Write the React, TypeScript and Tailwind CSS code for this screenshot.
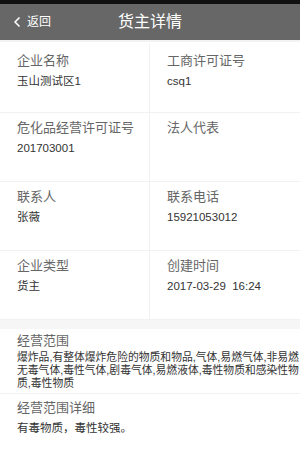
import { ChevronLeft } from "lucide-react";

const rows = [
  [
    { label: "企业名称", value: "玉山测试区1" },
    { label: "工商许可证号", value: "csq1" },
  ],
  [
    { label: "危化品经营许可证号", value: "201703001" },
    { label: "法人代表", value: "" },
  ],
  [
    { label: "联系人", value: "张薇" },
    { label: "联系电话", value: "15921053012" },
  ],
  [
    { label: "企业类型", value: "货主" },
    { label: "创建时间", value: "2017-03-29  16:24" },
  ],
];

const scope = [
  "爆炸品,有整体爆炸危险的物质和物品,气体,易燃气体,非易燃",
  "无毒气体,毒性气体,剧毒气体,易燃液体,毒性物质和感染性物",
  "质,毒性物质",
];

function Cell({ label, value, left, first }: { label: string; value: string; left: boolean; first: boolean }) {
  return (
    <div className={`h-[68px] pl-[17px] ${first ? "pt-[8px]" : "pt-[6px]"} ${left ? "border-r border-[#f1f1f1]" : ""}`}>
      <div className="text-[13px] leading-[18px] text-[#666]">{label}</div>
      <div className="mt-[3px] text-[11.5px] leading-[16px] text-[#333] whitespace-pre">{value}</div>
    </div>
  );
}

export default function App() {
  return (
    <div
      className="w-[300px] h-[450px] overflow-hidden bg-white"
      style={{ fontFamily: '"Liberation Sans", "Noto Sans CJK SC", sans-serif' }}
    >
      <div className="h-[4px] bg-[#111]" />
      <div className="relative h-[36px] bg-[#676767] flex items-center justify-center">
        <div className="absolute left-[9px] top-0 h-full flex items-center text-white">
          <ChevronLeft className="w-[16px] h-[16px]" strokeWidth={2.5} />
          <span className="ml-[2px] text-[12px]">返回</span>
        </div>
        <span className="text-[16px] text-white">货主详情</span>
      </div>
      <div className="h-[2px] bg-[#f3f3f3]" />
      <div className="h-[2px]" />

      {rows.map((row, i) => (
        <div key={i} className="grid grid-cols-2 border-b border-[#f1f1f1]">
          <Cell label={row[0].label} value={row[0].value} left first={i === 0} />
          <Cell label={row[1].label} value={row[1].value} left={false} first={i === 0} />
        </div>
      ))}

      <div className="h-[9px] bg-[#f6f6f6]" />

      <div className="pl-[17px] pt-[3px] pb-[3px] border-b border-[#f1f1f1]">
        <div className="text-[13px] leading-[18px] text-[#666]">经营范围</div>
        <div className="mt-[1px] text-[10.8px] leading-[13px] text-[#333]">
          {scope.map((line) => (
            <div key={line} className="whitespace-nowrap">
              {line}
            </div>
          ))}
        </div>
      </div>

      <div className="pl-[17px] pt-[5px]">
        <div className="text-[13px] leading-[18px] text-[#666]">经营范围详细</div>
        <div className="mt-[3px] text-[11.5px] leading-[16px] text-[#333]">有毒物质，毒性较强。</div>
      </div>
    </div>
  );
}
